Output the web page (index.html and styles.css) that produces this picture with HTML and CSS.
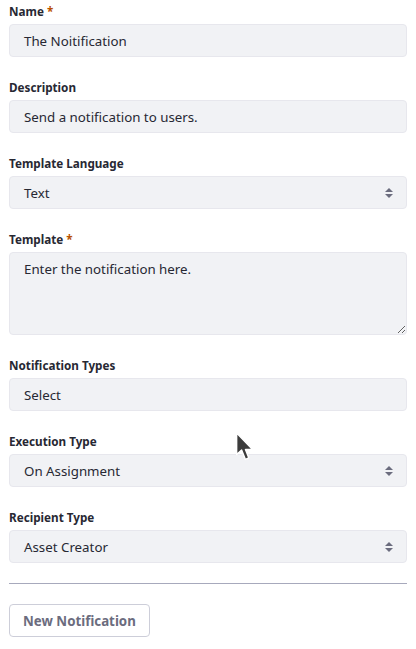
FILE: index.html
```html
<!DOCTYPE html>
<html lang="en">
<head>
<meta charset="utf-8">
<title>Notification</title>
<link rel="stylesheet" href="styles.css">
</head>
<body>
<form class="form">
  <div class="group">
    <label class="label">Name <span class="req">*</span></label>
    <div class="control">The Noitification</div>
  </div>
  <div class="group">
    <label class="label">Description</label>
    <div class="control">Send a notification to users.</div>
  </div>
  <div class="group">
    <label class="label">Template Language</label>
    <div class="control select"><span>Text</span>
      <svg class="arrows" width="10" height="12" viewBox="0 0 10 12"><path d="M1 5 L5 1 L9 5 Z M1 7 L5 11 L9 7 Z" fill="#6b6c7e"/></svg>
    </div>
  </div>
  <div class="group">
    <label class="label">Template <span class="req">*</span></label>
    <textarea class="control textarea">Enter the notification here.</textarea>
  </div>
  <div class="group">
    <label class="label">Notification Types</label>
    <div class="control">Select</div>
  </div>
  <div class="group">
    <label class="label">Execution Type</label>
    <div class="control select"><span>On Assignment</span>
      <svg class="arrows" width="10" height="12" viewBox="0 0 10 12"><path d="M1 5 L5 1 L9 5 Z M1 7 L5 11 L9 7 Z" fill="#6b6c7e"/></svg>
    </div>
  </div>
  <div class="group last">
    <label class="label">Recipient Type</label>
    <div class="control select"><span>Asset Creator</span>
      <svg class="arrows" width="10" height="12" viewBox="0 0 10 12"><path d="M1 5 L5 1 L9 5 Z M1 7 L5 11 L9 7 Z" fill="#6b6c7e"/></svg>
    </div>
  </div>
  <hr class="sep">
  <div class="actions">
    <button type="button" class="btn">New Notification</button>
  </div>
</form>
<svg class="cursor" width="22" height="36" viewBox="0 0 20 32"><path d="M1.5 1.5 L1.5 21 L6 17 L9.5 25.5 L12.5 24 L9.5 16.5 L16 16.5 Z" fill="#3c3c3c" stroke="#fff" stroke-width="1.3" stroke-linejoin="round"/></svg>
</body>
</html>
```
FILE: styles.css
```css
* { box-sizing: border-box; }
html, body { margin: 0; background: #fff; }
body {
  font-family: "Noto Sans", "Open Sans", "Liberation Sans", sans-serif;
  color: #272833;
  padding: 3px 9px 0 9px;
  position: relative;
}
.form { display: flex; flex-direction: column; }
.group { display: flex; flex-direction: column; margin-bottom: 22px; }
.group.last { margin-bottom: 20px; }
.label {
  font-size: 11.7px;
  font-weight: 700;
  line-height: 17px;
  margin-bottom: 4px;
  color: #272833;
}
.req { color: #b95000; }
.control {
  height: 33px;
  background: #f1f2f5;
  border: 1px solid #e7e7ed;
  border-radius: 4px;
  font-size: 13.3px;
  line-height: 20px;
  padding: 0 14px;
  display: flex;
  align-items: center;
  color: #272833;
  font-family: inherit;
}
.select { justify-content: space-between; padding-right: 12px; }
.arrows { display: block; }
.textarea {
  display: block;
  height: 83px;
  padding: 6px 14px;
  resize: vertical;
  outline: none;
  width: 100%;
}
.sep {
  border: 0;
  border-top: 1px solid #a7a9bc;
  margin: 0 0 20px 0;
  height: 0;
}
.actions { display: flex; }
.btn {
  height: 33px;
  padding: 0 13px;
  background: #fff;
  border: 1px solid #cdced9;
  border-radius: 4px;
  font-family: inherit;
  font-size: 13.3px;
  font-weight: 700;
  color: #6b6c7e;
}
.cursor { position: absolute; left: 235px; top: 431px; }
```
